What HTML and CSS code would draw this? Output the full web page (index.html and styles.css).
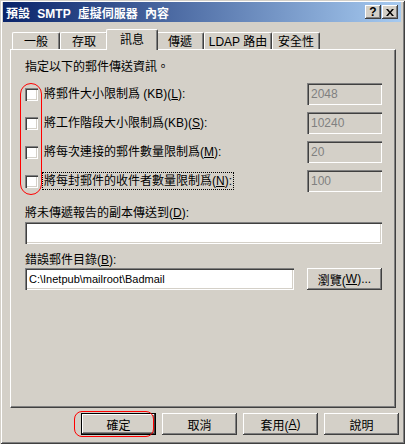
FILE: index.html
```html
<!DOCTYPE html>
<html lang="zh-Hant">
<head>
<meta charset="utf-8">
<title>預設 SMTP 虛擬伺服器 內容</title>
<link rel="stylesheet" href="styles.css">
</head>
<body>
<div class="window">
  <div class="titlebar">
    <span class="title">預設 SMTP 虛擬伺服器 內容</span>
    <div class="tb-btns">
      <span class="tbtn help">?</span>
      <span class="tbtn close"><svg width="8" height="7" viewBox="0 0 8 7"><path d="M0 0h2l2 2.5L6 0h2L5 3.5 8 7H6L4 4.5 2 7H0l3-3.5z" fill="#000"/></svg></span>
    </div>
  </div>

  <div class="tabs">
    <div class="tab">一般</div>
    <div class="tab">存取</div>
    <div class="tab selected">訊息</div>
    <div class="tab">傳遞</div>
    <div class="tab wide">LDAP 路由</div>
    <div class="tab">安全性</div>
  </div>

  <div class="panel">
    <p class="intro">指定以下的郵件傳送資訊。</p>
    <div class="rows">
      <div class="row">
        <label class="chk"><span class="box"></span><span class="lbl">將郵件大小限制爲 (KB)(<u>L</u>):</span></label>
        <span class="field disabled">2048</span>
      </div>
      <div class="row">
        <label class="chk"><span class="box"></span><span class="lbl">將工作階段大小限制爲(KB)(<u>S</u>):</span></label>
        <span class="field disabled">10240</span>
      </div>
      <div class="row">
        <label class="chk"><span class="box"></span><span class="lbl">將每次連接的郵件數量限制爲(<u>M</u>):</span></label>
        <span class="field disabled">20</span>
      </div>
      <div class="row">
        <label class="chk"><span class="box"></span><span class="lbl focus">將每封郵件的收件者數量限制爲(<u>N</u>):</span></label>
        <span class="field disabled">100</span>
      </div>
    </div>

    <p class="caption first">將未傳遞報告的副本傳送到(<u>D</u>):</p>
    <span class="field full"></span>

    <p class="caption">錯誤郵件目錄(<u>B</u>):</p>
    <div class="pathrow">
      <span class="field path">C:\Inetpub\mailroot\Badmail</span>
      <span class="btn">瀏覽(<u>W</u>)...</span>
    </div>
  </div>

  <div class="buttons">
    <span class="btn default">確定</span>
    <span class="btn">取消</span>
    <span class="btn">套用(<u>A</u>)</span>
    <span class="btn">說明</span>
  </div>

  <div class="annot annot-checks"></div>
  <div class="annot annot-ok"></div>
</div>
</body>
</html>
```

FILE: styles.css
```css
* { box-sizing: border-box; }

body {
  margin: 0;
  background: #3a6ea5;
  font-family: "Liberation Sans", "Noto Sans CJK TC", sans-serif;
  font-size: 12px;
  color: #000;
}

.window {
  position: relative;
  width: 405px;
  height: 444px;
  padding: 2px 4px 2px 3px;
  background: #d4d0c8;
  box-shadow: inset 1px 1px 0 #d4d0c8, inset -1px -1px 0 #404040,
              inset 2px 2px 0 #ffffff, inset -2px -2px 0 #808080;
}

/* title bar */
.titlebar {
  height: 20px;
  display: flex;
  align-items: center;
  justify-content: space-between;
  padding: 0 3px 0 3px;
  background: linear-gradient(to right, #0a246a, #a6caf0);
}
.title {
  color: #fff;
  font-weight: bold;
  font-size: 12px;
  white-space: pre;
  word-spacing: 4px;
}
.tb-btns { display: flex; gap: 1px; }
.tbtn {
  width: 16px;
  height: 14px;
  display: flex;
  align-items: center;
  justify-content: center;
  background: #d4d0c8;
  font-weight: bold;
  font-size: 12px;
  line-height: 1;
  box-shadow: inset -1px -1px 0 #404040, inset 1px 1px 0 #ffffff,
              inset -2px -2px 0 #808080;
}

/* tabs */
.tabs {
  display: flex;
  align-items: flex-end;
  height: 20px;
  margin: 7px 0 0 9px;
  position: relative;
  z-index: 1;
}
.tab {
  width: 48px;
  height: 17px;
  display: flex;
  align-items: center;
  justify-content: center;
  border-top: 1px solid #fff;
  border-left: 1px solid #fff;
  border-right: 1px solid #404040;
  box-shadow: inset -1px 0 0 #808080;
  border-radius: 2px 2px 0 0;
  background: #d4d0c8;
  padding-bottom: 1px;
  font-size: 12px;
}
.tab.wide { width: 68px; }
.tab.selected {
  height: 21px;
  width: 52px;
  margin: 0 -2px -1px;
  padding-bottom: 3px;
  position: relative;
  z-index: 2;
}

/* panel */
.panel {
  height: 359px;
  margin-left: 7px;
  width: 386px;
  border-top: 1px solid #fff;
  border-left: 1px solid #fff;
  border-right: 1px solid #404040;
  border-bottom: 1px solid #404040;
  box-shadow: inset -1px -1px 0 #808080;
  padding: 10px 13px 0 14px;
}
.intro { margin: 0; line-height: 14px; }

.rows {
  display: flex;
  flex-direction: column;
  gap: 7px;
  margin-top: 9px;
}
.row {
  display: flex;
  align-items: center;
  justify-content: space-between;
  height: 22px;
}
.chk { display: flex; align-items: center; gap: 5px; }
.box {
  width: 13px;
  height: 13px;
  background: #fff;
  box-shadow: inset 1px 1px 0 #808080, inset 2px 2px 0 #404040,
              inset -1px -1px 0 #ffffff, inset -2px -2px 0 #d4d0c8;
}
.lbl { line-height: 14px; padding: 1px 1px; }
.lbl.focus { outline: 1px dotted #000; outline-offset: 0; }

.field {
  display: flex;
  align-items: center;
  height: 22px;
  padding: 0 4px;
  background: #fff;
  box-shadow: inset 1px 1px 0 #808080, inset 2px 2px 0 #404040,
              inset -1px -1px 0 #ffffff, inset -2px -2px 0 #d4d0c8;
}
.field.disabled {
  width: 75px;
  background: #d4d0c8;
  color: #808080;
}
.field.full { width: 357px; }

.caption { margin: 0; line-height: 14px; }
.caption.first { margin-top: 14px; margin-bottom: 2px; }
.caption + .pathrow { margin-top: 1px; }
.field.full + .caption { margin-top: 9px; }

.pathrow {
  display: flex;
  justify-content: space-between;
  align-items: center;
}
.field.path { width: 269px; font-size: 11px; }

/* buttons */
.btn {
  width: 75px;
  height: 22px;
  display: flex;
  align-items: center;
  justify-content: center;
  background: #d4d0c8;
  box-shadow: inset -1px -1px 0 #404040, inset 1px 1px 0 #ffffff,
              inset -2px -2px 0 #808080;
}
.btn.default {
  box-shadow: inset 0 0 0 1px #000, inset -2px -2px 0 #404040,
              inset 2px 2px 0 #ffffff, inset -3px -3px 0 #808080;
}

.buttons {
  display: flex;
  justify-content: flex-end;
  gap: 6px;
  margin-top: 5px;
  padding-right: 2px;
}

/* red annotation marks */
.annot {
  position: absolute;
  border: 1px solid #ff0000;
}
.annot-checks {
  left: 20px;
  top: 83px;
  width: 22px;
  height: 112px;
  border-radius: 11px;
}
.annot-ok {
  left: 74px;
  top: 411px;
  width: 80px;
  height: 26px;
  border-radius: 8px;
}
```
